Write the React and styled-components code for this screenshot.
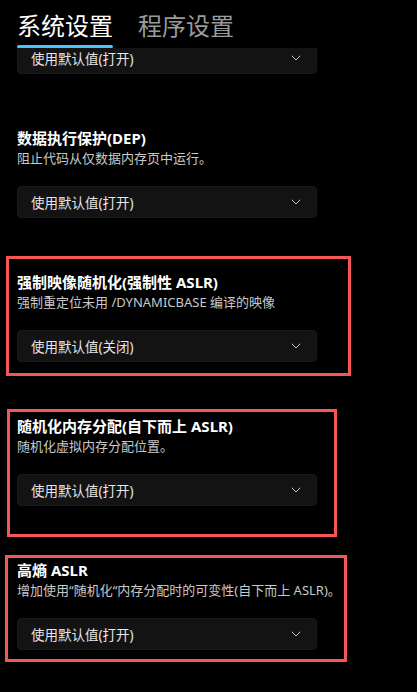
import React from 'react'
import styled, { createGlobalStyle } from 'styled-components'
import { ChevronDown } from 'lucide-react'

const GlobalStyle = createGlobalStyle`
  html, body {
    margin: 0;
    padding: 0;
    background: #000;
  }
  body {
    font-family: "Noto Sans", "Noto Sans CJK SC", sans-serif;
    color: #fff;
  }
`

const Page = styled.div`
  width: 417px;
  height: 692px;
  display: flex;
  flex-direction: column;
  background: #000;
  overflow: hidden;
`

const TabBar = styled.div`
  height: 48px;
  flex: 0 0 48px;
  display: flex;
  gap: 25px;
  padding-left: 17px;
  box-sizing: border-box;
  background: #000;
`

const Tab = styled.div`
  position: relative;
  font-size: 24px;
  line-height: 30px;
  padding-top: 11px;
  color: ${p => (p.$active ? '#ffffff' : '#9b9b9b')};
  &::after {
    content: '';
    display: ${p => (p.$active ? 'block' : 'none')};
    position: absolute;
    left: 0;
    right: 0;
    top: 45px;
    height: 3px;
    border-radius: 2px;
    background: #4cc2ff;
  }
`

const ScrollArea = styled.div`
  flex: 1;
  overflow: hidden;
`

const Content = styled.div`
  margin-top: -6px;
  display: flex;
  flex-direction: column;
`

const Section = styled.div`
  position: relative;
  padding: 0 17px 54px;
`

const Title = styled.div`
  font-size: 15px;
  font-weight: 700;
  line-height: 20px;
  color: #fff;
  white-space: nowrap;
`

const Description = styled.div`
  font-size: 13px;
  line-height: 20px;
  color: #c9c9c9;
  white-space: nowrap;
  margin-bottom: 18px;
`

const Select = styled.div`
  width: 300px;
  height: 32px;
  box-sizing: border-box;
  display: flex;
  align-items: center;
  justify-content: space-between;
  padding: 0 12px 0 13px;
  border-radius: 4px;
  background: #131313;
  border: 1px solid #191919;
  font-size: 13.5px;
  color: #e6e6e6;
  svg {
    color: #c4c4c4;
  }
`

const Annotation = styled.div`
  position: absolute;
  top: ${p => p.$top}px;
  left: ${p => p.$left}px;
  width: ${p => p.$width}px;
  height: ${p => p.$height}px;
  box-sizing: border-box;
  border: 3px solid #f55757;
  pointer-events: none;
`

const sections = [
  {
    title: '数据执行保护(DEP)',
    desc: '阻止代码从仅数据内存页中运行。',
    value: '使用默认值(打开)',
  },
  {
    title: '强制映像随机化(强制性 ASLR)',
    desc: '强制重定位未用 /DYNAMICBASE 编译的映像',
    value: '使用默认值(关闭)',
    box: { top: -16, left: 6, width: 345, height: 120 },
  },
  {
    title: '随机化内存分配(自下而上 ASLR)',
    desc: '随机化虚拟内存分配位置。',
    value: '使用默认值(打开)',
    box: { top: -7, left: 7, width: 330, height: 128 },
  },
  {
    title: '高熵 ASLR',
    desc: '增加使用“随机化“内存分配时的可变性(自下而上 ASLR)。',
    value: '使用默认值(打开)',
    box: { top: -5, left: 5, width: 342, height: 107 },
  },
]

const Dropdown = ({ value }) => (
  <Select>
    <span>{value}</span>
    <ChevronDown size={16} strokeWidth={1.5} />
  </Select>
)

const App = () => {
  return (
    <Page>
      <GlobalStyle />
      <TabBar>
        <Tab $active>系统设置</Tab>
        <Tab>程序设置</Tab>
      </TabBar>
      <ScrollArea>
        <Content>
          <Section>
            <Dropdown value="使用默认值(打开)" />
          </Section>
          {sections.map((s, i) => (
            <Section key={i}>
              <Title>{s.title}</Title>
              <Description>{s.desc}</Description>
              <Dropdown value={s.value} />
              {s.box && (
                <Annotation
                  $top={s.box.top}
                  $left={s.box.left}
                  $width={s.box.width}
                  $height={s.box.height}
                />
              )}
            </Section>
          ))}
        </Content>
      </ScrollArea>
    </Page>
  )
}

export default App
